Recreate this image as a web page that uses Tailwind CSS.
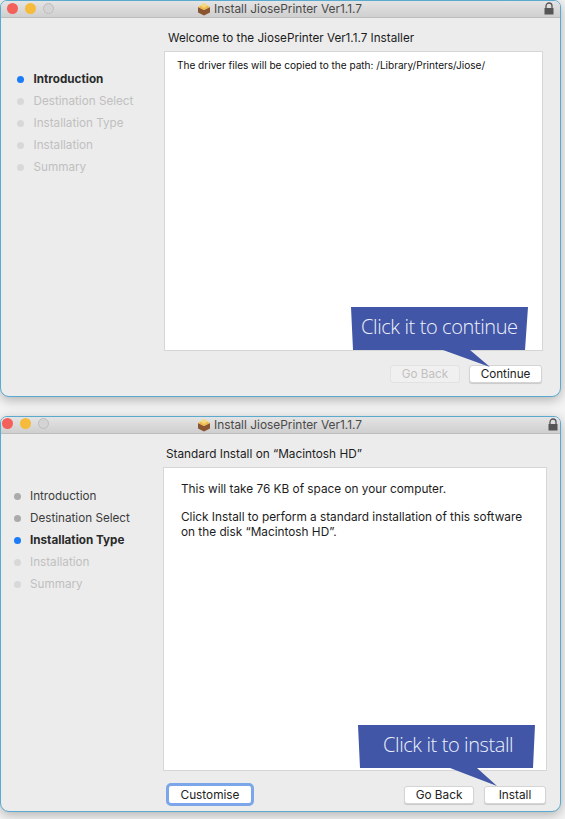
<!DOCTYPE html>
<html lang="en">
<head>
  <meta charset="UTF-8">
  <title>Install JiosePrinter</title>
  <script src="https://cdn.jsdelivr.net/npm/@tailwindcss/browser@4"></script>
</head>
<body class="w-[565px] h-[819px] overflow-hidden bg-[#f4f4f4] font-['Inter','Liberation_Sans',sans-serif] text-[#222]">
  <main class="relative w-[565px] h-[819px]">

    <!-- First window -->
    <section class="w-[561px] h-[397px] rounded-b-[9px] rounded-t-[7px] border border-[#5aaad0] bg-[#ececec] overflow-hidden shadow-[0_3px_12px_rgba(0,0,0,0.28)] relative z-10">
      <header class="h-[17px] pr-[2px] flex items-center justify-center gap-[3px] bg-gradient-to-b from-[#e4e4e4] to-[#cfcfcf] border-b border-[#bdbdbd] relative">
        <div class="absolute left-[6px] top-[2px] flex gap-[7px]">
          <span class="w-[11px] h-[11px] rounded-full bg-[#f4605a]"></span>
          <span class="w-[11px] h-[11px] rounded-full bg-[#f6bb3c]"></span>
          <span class="w-[11px] h-[11px] rounded-full bg-[#d4d4d4] border border-[#bcbcbc]"></span>
        </div>
        <svg width="14" height="14" viewBox="0 0 14 14">
          <path d="M1 5 7 8l6-3v5.500L7 13.500 1 10.500z" fill="#8a5530"/>
          <path d="M1 5 7 2l6 3-6 3z" fill="#eeb94a"/>
          <path d="M3 3.500 7 1l4 2.500L7 6z" fill="#f5d77c"/>
        </svg>
        <span class="text-[11.900px] text-[#4a4a4a]">Install JiosePrinter Ver1.1.7</span>
        <svg class="absolute right-[5px] top-[1px]" width="12" height="13" viewBox="0 0 12 13">
          <path d="M3 6V4a3 3 0 0 1 6 0v2" fill="none" stroke="#555" stroke-width="1.300"/>
          <rect x="1.500" y="6" width="9" height="6.500" fill="#555"/>
        </svg>
      </header>
      <div class="flex">
        <aside class="w-[163px] pt-[50px] pl-[16px] text-[11.700px] leading-[22px] text-[#c0c0c0]">
          <div class="flex items-center gap-[9.500px] font-bold text-[#2a2a2a]"><span class="w-[7px] h-[7px] rounded-full bg-[#1a7cf7]"></span>Introduction</div>
          <div class="flex items-center gap-[9.500px]"><span class="w-[7px] h-[7px] rounded-full bg-[#d8d8d8]"></span>Destination Select</div>
          <div class="flex items-center gap-[9.500px]"><span class="w-[7px] h-[7px] rounded-full bg-[#d8d8d8]"></span>Installation Type</div>
          <div class="flex items-center gap-[9.500px]"><span class="w-[7px] h-[7px] rounded-full bg-[#d8d8d8]"></span>Installation</div>
          <div class="flex items-center gap-[9.500px]"><span class="w-[7px] h-[7px] rounded-full bg-[#d8d8d8]"></span>Summary</div>
        </aside>
        <div class="w-[379px] pt-[12px]">
          <h1 class="pl-[4px] text-[11.700px] leading-[16px] font-normal text-[#1c1c1c]">Welcome to the JiosePrinter Ver1.1.7 Installer</h1>
          <div class="mt-[5px] h-[300px] bg-white border border-[#d6d6d6] pl-[12px] pt-[6px] text-[10.050px] leading-[14px] text-[#111]">The driver files will be copied to the path: /Library/Printers/Jiose/</div>
          <div class="mt-[14px] flex justify-end gap-[9px] pr-[1px] text-[11.700px]">
            <button class="w-[70px] h-[18px] rounded-[3px] bg-[#f0f0f0] border border-[#e2e2e2] text-[#c0c0c0] leading-[16px]">Go Back</button>
            <button class="w-[73px] h-[18px] rounded-[3px] bg-white border border-[#d4d4d4] shadow-[0_1px_1px_rgba(0,0,0,0.15)] text-[#222] leading-[16px]">Continue</button>
          </div>
        </div>
      </div>
    </section>

    <!-- Second window -->
    <section class="mt-[19px] w-[561px] h-[396px] rounded-b-[9px] rounded-t-[7px] border border-[#5aaad0] bg-[#ececec] overflow-hidden shadow-[0_3px_12px_rgba(0,0,0,0.28)] relative">
      <header class="h-[17px] pr-[2px] flex items-center justify-center gap-[3px] bg-gradient-to-b from-[#e4e4e4] to-[#cfcfcf] border-b border-[#bdbdbd] relative">
        <div class="absolute left-[1px] top-[1px] flex gap-[7px]">
          <span class="w-[11px] h-[11px] rounded-full bg-[#f4605a]"></span>
          <span class="w-[11px] h-[11px] rounded-full bg-[#f6bb3c]"></span>
          <span class="w-[11px] h-[11px] rounded-full bg-[#d4d4d4] border border-[#bcbcbc]"></span>
        </div>
        <svg width="14" height="14" viewBox="0 0 14 14">
          <path d="M1 5 7 8l6-3v5.500L7 13.500 1 10.500z" fill="#8a5530"/>
          <path d="M1 5 7 2l6 3-6 3z" fill="#eeb94a"/>
          <path d="M3 3.500 7 1l4 2.500L7 6z" fill="#f5d77c"/>
        </svg>
        <span class="text-[11.900px] text-[#4a4a4a]">Install JiosePrinter Ver1.1.7</span>
        <svg class="absolute right-[1px] top-[1px]" width="12" height="13" viewBox="0 0 12 13">
          <path d="M3 6V4a3 3 0 0 1 6 0v2" fill="none" stroke="#555" stroke-width="1.300"/>
          <rect x="1.500" y="6" width="9" height="6.500" fill="#555"/>
        </svg>
      </header>
      <div class="flex">
        <aside class="w-[162px] pt-[51px] pl-[13px] text-[11.700px] leading-[22px] text-[#3c3c3c]">
          <div class="flex items-center gap-[9px]"><span class="w-[7px] h-[7px] rounded-full bg-[#ababab]"></span>Introduction</div>
          <div class="flex items-center gap-[9px]"><span class="w-[7px] h-[7px] rounded-full bg-[#ababab]"></span>Destination Select</div>
          <div class="flex items-center gap-[9px] font-bold text-[#2a2a2a]"><span class="w-[7px] h-[7px] rounded-full bg-[#1a7cf7]"></span>Installation Type</div>
          <div class="flex items-center gap-[9px] text-[#c0c0c0]"><span class="w-[7px] h-[7px] rounded-full bg-[#d8d8d8]"></span>Installation</div>
          <div class="flex items-center gap-[9px] text-[#c0c0c0]"><span class="w-[7px] h-[7px] rounded-full bg-[#d8d8d8]"></span>Summary</div>
        </aside>
        <div class="w-[384px] pt-[12px]">
          <h1 class="pl-[3px] text-[11.800px] leading-[16px] font-normal text-[#1c1c1c]">Standard Install on “Macintosh HD”</h1>
          <div class="mt-[5px] h-[304px] bg-white border border-[#d6d6d6] pl-[17px] pr-[16px] pt-[14px] text-[11.800px] leading-[15px] text-[#1c1c1c]">
            <p>This will take 76 KB of space on your computer.</p>
            <p class="mt-[13px]">Click Install to perform a standard installation of this software on the disk “Macintosh HD”.</p>
          </div>
          <div class="mt-[12px] flex items-center text-[11.800px] text-[#222]">
            <button class="ml-[3px] w-[88px] h-[23px] rounded-[5px] bg-white border-[3px] border-[#7ba7ea] leading-[16px]">Customise</button>
            <button class="ml-auto w-[70px] h-[18px] rounded-[3px] bg-white border border-[#d4d4d4] shadow-[0_1px_1px_rgba(0,0,0,0.15)] leading-[16px]">Go Back</button>
            <button class="ml-[10px] mr-[1px] w-[62px] h-[18px] rounded-[3px] bg-white border border-[#d4d4d4] shadow-[0_1px_1px_rgba(0,0,0,0.15)] leading-[16px]">Install</button>
          </div>
        </div>
      </div>
    </section>

    <!-- Callouts -->
    <div class="absolute z-20 left-[351px] top-[307px] w-[177px] h-[61px]">
      <svg class="absolute inset-0" width="177" height="61" viewBox="0 0 177 61"><path d="M0 0H177L174 43H119L139 60 92 43H2z" fill="#4156a6"/></svg>
      <span class="absolute left-[10px] top-[6px] text-[20px] leading-[28px] font-light text-[#eef1fb] font-['Open_Sans',sans-serif] tracking-[-0.4px] whitespace-nowrap">Click it to continue</span>
    </div>
    <div class="absolute z-20 left-[358px] top-[725px] w-[177px] h-[61px]">
      <svg class="absolute inset-0" width="177" height="61" viewBox="0 0 177 61"><path d="M0 0H177L175 43H119L139 61 92 43H2z" fill="#4156a6"/></svg>
      <span class="absolute left-[25px] top-[6px] text-[20px] leading-[28px] font-light text-[#eef1fb] font-['Open_Sans',sans-serif] tracking-[-0.4px] whitespace-nowrap">Click it to install</span>
    </div>
  </main>
</body>
</html>
